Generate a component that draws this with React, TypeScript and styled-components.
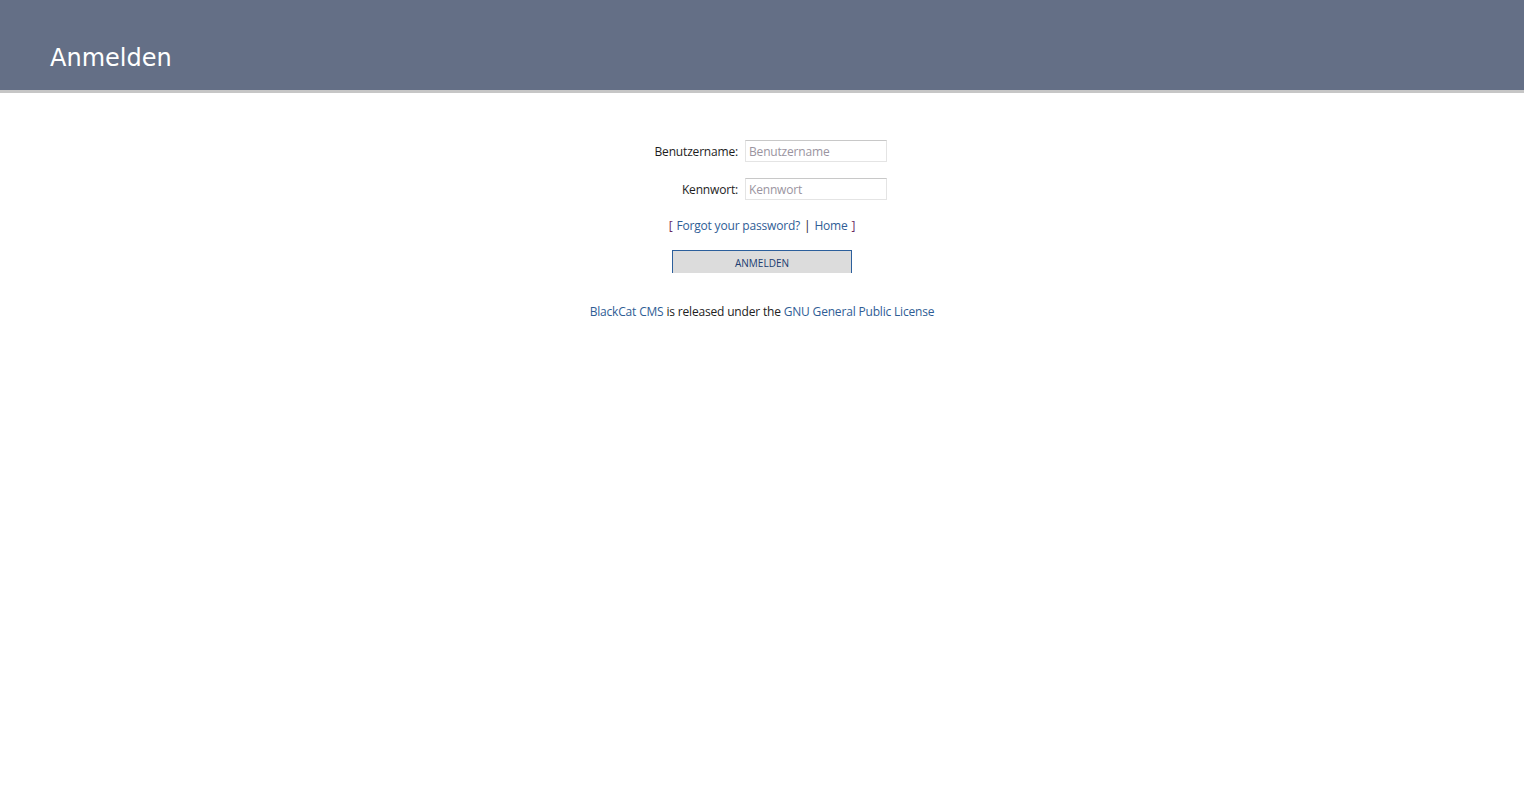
import React from "react";
import styled, { createGlobalStyle } from "styled-components";

const GlobalStyle = createGlobalStyle`
  html, body {
    margin: 0;
    padding: 0;
    background: #ffffff;
  }
  body {
    font-family: "Open Sans", "Liberation Sans", sans-serif;
    font-size: 12px;
    letter-spacing: -0.18px;
    color: #222222;
  }
`;

const Header = styled.header`
  height: 90px;
  background: #646f86;
  border-bottom: 3px solid #c6c6c6;
  box-sizing: content-box;
`;

const Title = styled.h1`
  margin: 0;
  padding: 44px 0 0 50px;
  font-family: "DejaVu Sans", Verdana, sans-serif;
  font-size: 24px;
  line-height: 28px;
  font-weight: normal;
  letter-spacing: 0;
  color: #ffffff;
`;

const Main = styled.main`
  padding: 47px 0 0 16px;
  display: flex;
  flex-direction: column;
  align-items: center;
`;

const FieldRow = styled.div`
  display: flex;
  align-items: flex-start;
  gap: 7px;
  height: 22px;
  margin-bottom: 16px;
`;

const Label = styled.label`
  width: 85px;
  padding-top: 1px;
  text-align: right;
  line-height: 22px;
  color: #1d1d1d;
  white-space: nowrap;
`;

const Input = styled.input`
  box-sizing: border-box;
  width: 142px;
  height: 22px;
  margin: 0;
  padding: 1px 3px 0;
  font-family: "Open Sans", "Liberation Sans", sans-serif;
  font-size: 12px;
  letter-spacing: -0.18px;
  color: #333333;
  border: 1px solid #e4e4e4;
  border-top-color: #c8c8c8;
  outline: none;
  &::placeholder {
    color: #9a94a0;
  }
`;

const LinkLine = styled.p`
  margin: 1px 0 0 -16px;
  line-height: 18px;
  color: #6a2b62;
  word-spacing: 1px;
`;

const Link = styled.a`
  color: #2f5d95;
  text-decoration: none;
  word-spacing: 0;
`;

const Pipe = styled.span`
  color: #222222;
`;

const SubmitButton = styled.button`
  box-sizing: border-box;
  margin: 15px 0 0 -16px;
  width: 180px;
  height: 23px;
  padding: 1px 0 0;
  background: #dcdcdc;
  border: 1px solid #2c5f9c;
  border-bottom: none;
  font-family: "Open Sans", "Liberation Sans", sans-serif;
  font-size: 10px;
  text-transform: uppercase;
  color: #203c70;
  cursor: pointer;
`;

const Footer = styled.p`
  margin: 30px 0 0 -16px;
  line-height: 18px;
  color: #222222;
`;

export default function App() {
  return (
    <>
      <GlobalStyle />
      <Header>
        <Title>Anmelden</Title>
      </Header>
      <Main>
        <FieldRow>
          <Label htmlFor="username">Benutzername:</Label>
          <Input id="username" type="text" placeholder="Benutzername" />
        </FieldRow>
        <FieldRow>
          <Label htmlFor="password">Kennwort:</Label>
          <Input id="password" type="password" placeholder="Kennwort" />
        </FieldRow>
        <LinkLine>
          [ <Link href="#">Forgot your password?</Link> <Pipe>|</Pipe>{" "}
          <Link href="#">Home</Link> ]
        </LinkLine>
        <SubmitButton type="button">Anmelden</SubmitButton>
        <Footer>
          <Link href="#">BlackCat CMS</Link> is released under the{" "}
          <Link href="#">GNU General Public License</Link>
        </Footer>
      </Main>
    </>
  );
}
